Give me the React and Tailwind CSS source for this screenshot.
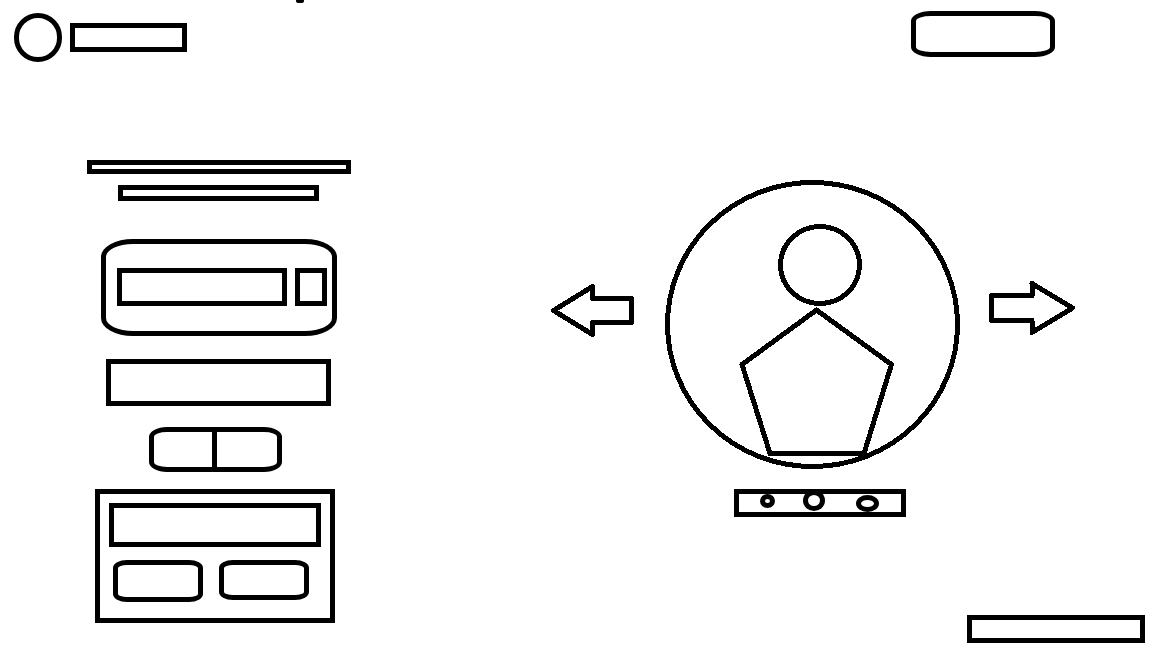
const line = "border-[5px] border-black";

function Header() {
  return (
    <header className="flex items-start justify-between pt-[11px] pr-[97px] pl-[14px]">
      <div className="flex items-center gap-2 pt-[2px]">
        <div className={`${line} h-[49px] w-12 rounded-full`} />
        <div className={`${line} h-[29px] w-[117px]`} />
      </div>
      <button
        type="button"
        aria-label="Account"
        className={`${line} h-[46px] w-36 rounded-[20px/10px]`}
      />
    </header>
  );
}

function SidePanel() {
  return (
    <section className="flex flex-col items-center pt-[98px]">
      <div className={`${line} h-[14px] w-[264px]`} />
      <div className={`${line} mt-[11px] h-4 w-[201px]`} />

      <form
        className={`${line} mt-[38px] flex h-[97px] w-[236px] items-start gap-2 rounded-[32px/18px] pt-6 pr-[5px] pl-[11px]`}
        onSubmit={(e) => e.preventDefault()}
      >
        <input aria-label="Search" className={`${line} h-[38px] min-w-0 flex-1 px-1`} />
        <button type="submit" aria-label="Submit" className={`${line} h-[38px] w-8`} />
      </form>

      <div className={`${line} mt-[23px] h-[47px] w-[225px]`} />

      <div className="flex flex-col items-center pr-[7px]">
        <div className={`${line} mt-[21px] flex h-[45px] w-[133px] rounded-[18px/10px]`}>
          <button
            type="button"
            aria-label="First option"
            className="w-[63px] border-r-[5px] border-black"
          />
          <button type="button" aria-label="Second option" className="flex-1" />
        </div>

        <div className={`${line} mt-[17px] h-[134px] w-60 p-[9px]`}>
          <div className={`${line} h-11`} />
          <div className="mt-[13px] flex items-start gap-4 pl-1">
            <button
              type="button"
              aria-label="Accept"
              className={`${line} h-[42px] w-[90px] rounded-[14px/8px]`}
            />
            <button
              type="button"
              aria-label="Decline"
              className={`${line} h-10 w-[90px] rounded-[14px/8px]`}
            />
          </div>
        </div>
      </div>
    </section>
  );
}

function Arrow({ label, points }) {
  return (
    <button type="button" aria-label={label} className="mt-[101px] shrink-0">
      <svg
        width="86"
        height="56"
        viewBox="0 0 86 56"
        fill="none"
        stroke="black"
        strokeWidth="5"
        strokeLinejoin="round"
        shapeRendering="crispEdges"
      >
        <polygon points={points} />
      </svg>
    </button>
  );
}

function Avatar() {
  return (
    <svg
      className="shrink-0"
      width="295"
      height="289"
      viewBox="0 0 295 289"
      fill="none"
      stroke="black"
      strokeWidth="5"
      strokeLinejoin="round"
      shapeRendering="crispEdges"
    >
      <ellipse cx="147.5" cy="144.5" rx="145" ry="142" />
      <ellipse cx="155" cy="85" rx="39.5" ry="38.5" />
      <polygon points="151.5,130 226.5,184.5 199,273.5 105,273.5 77,184.5" />
    </svg>
  );
}

function Carousel() {
  return (
    <section className="flex flex-col pt-[118px]">
      <div className="flex flex-col items-center pl-[35px]">
        <div className="flex items-start gap-[29px]">
          <Arrow
            label="Previous"
            points="3.5,29.5 42.5,5.5 42.5,17.5 81.5,17.5 81.5,41.5 42.5,41.5 42.5,53.5"
          />
          <Avatar />
          <Arrow
            label="Next"
            points="2.5,14.5 43,14.5 43,2.5 83.5,27 43,51.5 43,39.5 2.5,39.5"
          />
        </div>
        <div className="pt-5 pl-[15px]">
          <div className={`${line} flex h-7 w-[172px] items-start pl-[21px]`}>
            <button
              type="button"
              aria-label="Slide 1"
              className={`${line} h-[14px] w-[15px] rounded-[50%]`}
            />
            <button
              type="button"
              aria-label="Slide 2"
              className={`${line} -mt-1 ml-7 h-[21px] w-[22px] rounded-[50%]`}
            />
            <button
              type="button"
              aria-label="Slide 3"
              className={`${line} mt-px ml-[31px] h-[17px] w-[23px] rounded-[50%]`}
            />
          </div>
        </div>
      </div>
      <footer className={`${line} mt-auto mr-[7px] h-7 w-[178px] self-end`} />
    </section>
  );
}

export default function App() {
  return (
    <div className="relative flex min-h-screen flex-col bg-white pb-[5px]">
      <div className="absolute top-0 left-[296px] h-[3px] w-2 rounded-b-[2px] bg-black" />
      <Header />
      <main className="grid flex-1 grid-cols-[38%_1fr]">
        <SidePanel />
        <Carousel />
      </main>
    </div>
  );
}
